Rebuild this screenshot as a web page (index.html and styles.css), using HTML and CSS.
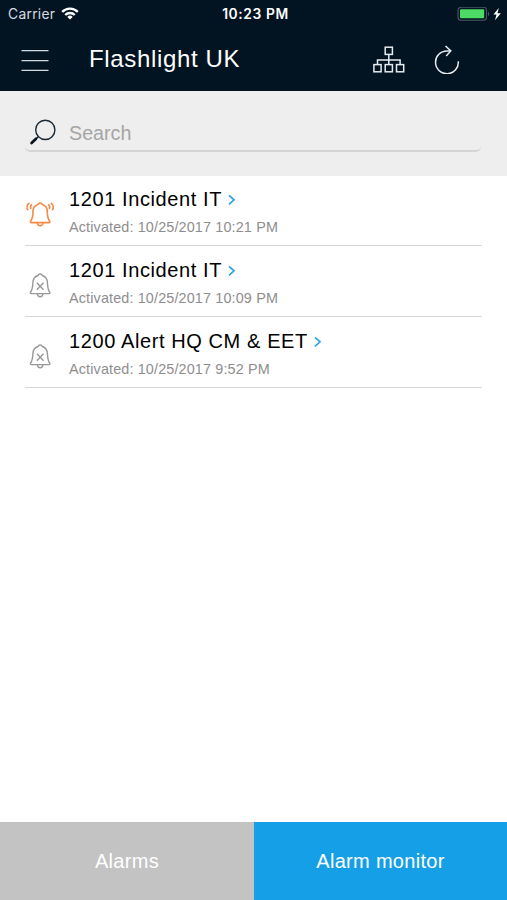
FILE: index.html
```html
<!DOCTYPE html>
<html lang="en">
<head>
  <meta charset="UTF-8" />
  <meta name="viewport" content="width=device-width, initial-scale=1.0"/>
  <title>Flashlight UK</title>
  <link rel="stylesheet" href="styles.css">
</head>
<body>

  <header class="header">
    <div class="status-bar">
      <div class="carrier">
        <span>Carrier</span>
        <svg class="wifi" width="18" height="13" viewBox="0 0 18 13" fill="none" stroke="#fff" stroke-width="2.3">
          <path d="M1.2 4.9a11 11 0 0 1 15.6 0M4.2 8a6.8 6.8 0 0 1 9.6 0" />
          <path d="M9 12.6L6.3 9.9a3.8 3.8 0 0 1 5.4 0z" fill="#fff" stroke="none" />
        </svg>
      </div>
      <div class="clock">10:23 PM</div>
      <div class="power">
        <svg width="45" height="15" viewBox="0 0 45 15">
          <rect x="1" y=".3" width="28.5" height="13" rx="3" fill="none" stroke="#4b5863" stroke-width="1.1" />
          <rect x="3" y="2.3" width="24.2" height="9" rx="1" fill="#4cd964" />
          <path d="M31 4.7c1.6.5 1.6 3.7 0 4.2z" fill="#4b5863" />
          <path d="M41.8 1L36.4 7.6h3.1L38 13.2l5.8-7h-3.3z" fill="#fff" />
        </svg>
      </div>
    </div>

    <div class="nav-bar">
      <svg class="menu-icon" width="28" height="24" viewBox="0 0 28 24" stroke="#d3dbe1" stroke-width="1.3">
        <path d="M.5 2.7h27M.5 12.7h27M.5 22.4h27" />
      </svg>
      <h1>Flashlight UK</h1>
      <svg class="network-icon" width="32" height="27" viewBox="0 0 32 27" fill="none" stroke="#e6ebef" stroke-width="1.5">
        <rect x="12.2" y="1.2" width="7.2" height="7.2" />
        <rect x=".9" y="18.6" width="7.2" height="7.2" />
        <rect x="12.2" y="18.6" width="7.2" height="7.2" />
        <rect x="23.5" y="18.6" width="7.2" height="7.2" />
        <path d="M15.8 8.4v10.2M4.5 18.6v-4.7h22.6v4.7" />
      </svg>
      <svg class="refresh-icon" width="26" height="29" viewBox="0 0 26 29" fill="none" stroke="#e6ebef" stroke-width="1.5">
        <path d="M24.3 16.3A11.4 11.4 0 1 1 13 5.9H16.6" />
        <path d="M11.5 1l5.3 4.9-4.6 5" />
      </svg>
    </div>
  </header>

  <div class="search">
    <div class="search-field">
      <svg width="27" height="27" viewBox="0 0 27 27" fill="none" stroke="#1b2936">
        <circle cx="16.3" cy="10.9" r="9.6" stroke-width="1.4" />
        <path d="M9.4 17.6L7 20" stroke-width="1.4" />
        <path d="M7 19.8L2.6 24" stroke="#06121e" stroke-width="2.7" stroke-linecap="round" />
      </svg>
      <span>Search</span>
    </div>
  </div>

  <main class="alarm-list">
    <div class="alarm active">
      <svg class="bell" width="30" height="28" viewBox="0 0 30 28">
        <path d="M6.2 22.6c-1 0-1.1-.8-.5-1.6 2-2.5 2.3-4.4 2.3-9.5 0-3.7 2.2-6.1 5-7 .4-2 3.9-2 4.3 0 2.8.9 5 3.3 5 7 0 5.1.3 7 2.3 9.5.6.8.5 1.6-.5 1.6z" />
        <path d="M12.4 22.8c.3 4.1 5.2 4.1 5.5 0" />
        <path d="M4.4 3C1.6 4.6 1.3 7.7 3 10.2M7 4.4C5.4 5.4 5.1 7.2 6 9M25.8 3c2.8 1.6 3.1 4.7 1.4 7.2M23.2 4.4c1.6 1 1.9 2.8 1 4.6" />
      </svg>
      <div class="alarm-text">
        <h2>1201 Incident IT <svg class="chevron" width="8" height="12" viewBox="0 0 8 12"><path d="M1 1.3l5 4.5-5 4.5" /></svg></h2>
        <p>Activated: 10/25/2017 10:21 PM</p>
      </div>
    </div>

    <div class="alarm">
      <svg class="bell" width="30" height="28" viewBox="0 0 30 28">
        <path d="M6.2 23.6c-1 0-1.1-.8-.5-1.6 1.7-2.5 2-4.4 2.2-9.5.2-3.7 2.3-6.1 5.1-7 .4-2 3.9-2 4.3 0 2.8.9 4.9 3.3 5.1 7 .2 5.1.5 7 2.2 9.5.6.8.5 1.6-.5 1.6z" />
        <path d="M12.4 23.8c.3 4 5.2 4 5.5 0M11.9 12.8l6.6 7M18.5 12.8l-6.6 7" />
      </svg>
      <div class="alarm-text">
        <h2>1201 Incident IT <svg class="chevron" width="8" height="12" viewBox="0 0 8 12"><path d="M1 1.3l5 4.5-5 4.5" /></svg></h2>
        <p>Activated: 10/25/2017 10:09 PM</p>
      </div>
    </div>

    <div class="alarm">
      <svg class="bell" width="30" height="28" viewBox="0 0 30 28">
        <path d="M6.2 23.6c-1 0-1.1-.8-.5-1.6 1.7-2.5 2-4.4 2.2-9.5.2-3.7 2.3-6.1 5.1-7 .4-2 3.9-2 4.3 0 2.8.9 4.9 3.3 5.1 7 .2 5.1.5 7 2.2 9.5.6.8.5 1.6-.5 1.6z" />
        <path d="M12.4 23.8c.3 4 5.2 4 5.5 0M11.9 12.8l6.6 7M18.5 12.8l-6.6 7" />
      </svg>
      <div class="alarm-text">
        <h2>1200 Alert HQ CM &amp; EET <svg class="chevron" width="8" height="12" viewBox="0 0 8 12"><path d="M1 1.3l5 4.5-5 4.5" /></svg></h2>
        <p>Activated: 10/25/2017 9:52 PM</p>
      </div>
    </div>
  </main>

  <nav class="tabs">
    <div class="tab">Alarms</div>
    <div class="tab selected">Alarm monitor</div>
  </nav>

</body>
</html>
```

FILE: styles.css
```css
* {
  box-sizing: border-box;
  margin: 0;
  padding: 0;
}

body {
  font-family: "Liberation Sans", Arial, sans-serif;
  background: #fff;
  height: 100vh;
  display: flex;
  flex-direction: column;
  overflow: hidden;
}

svg {
  display: block;
  flex-shrink: 0;
}

/* Header */
.header {
  height: 91px;
  background: #021422;
  color: #fff;
}

.status-bar {
  height: 28px;
  padding: 0 5px 0 8px;
  display: grid;
  grid-template-columns: 1fr auto 1fr;
  align-items: center;
  font-family: Inter, sans-serif;
  font-size: 13.8px;
}

.carrier {
  display: flex;
  align-items: center;
  gap: 6px;
  color: #d5dbe0;
  letter-spacing: 0.3px;
}

.wifi {
  margin-top: -2px;
}

.clock {
  padding-left: 1px;
  font-weight: 600;
  font-size: 13.8px;
  letter-spacing: 0.6px;
}

.power {
  justify-self: end;
}

.nav-bar {
  height: 63px;
  padding: 0 47px 0 21px;
  display: flex;
  align-items: center;
}

.nav-bar h1 {
  flex: 1;
  margin: -2px 0 0 40px;
  font-size: 24px;
  font-weight: normal;
  letter-spacing: 0.65px;
}

.refresh-icon {
  margin-left: 29px;
}

/* Search */
.search {
  height: 85px;
  padding: 24px 26px 0 25px;
  background: #eee;
}

.search-field {
  height: 37px;
  padding: 0 4px;
  display: flex;
  align-items: center;
  gap: 13px;
  border-bottom: 2px solid #d5d5d5;
  border-radius: 5px;
  font-size: 19.7px;
  color: #a5a5a5;
}

.search-field span {
  padding-top: 2px;
}

/* Alarm list */
.alarm-list {
  flex: 1;
  padding: 0 25px;
}

.alarm {
  height: 71px;
  display: flex;
  gap: 14px;
  border-bottom: 1px solid #d4d8da;
}

.alarm:first-child {
  height: 70px;
}

.bell {
  margin-top: 24px;
  fill: none;
  stroke: #999;
  stroke-width: 1.4;
}

.alarm.active .bell {
  stroke: #f58a45;
  stroke-width: 1.6;
}

.alarm-text {
  padding-top: 12px;
}

.alarm.active .alarm-text {
  padding-top: 11px;
}

.alarm h2 {
  display: flex;
  align-items: center;
  gap: 6px;
  font-size: 20px;
  line-height: 24px;
  font-weight: normal;
  letter-spacing: 0.6px;
  color: #000;
}

.chevron {
  margin-top: 2px;
  fill: none;
  stroke: #2ba3e4;
  stroke-width: 1.7;
}

.alarm p {
  margin-top: 7px;
  font-size: 14.4px;
  line-height: 18px;
  letter-spacing: 0.14px;
  color: #8e8e8e;
}

/* Bottom tabs */
.tabs {
  display: flex;
  height: 78px;
}

.tab {
  width: 254px;
  display: flex;
  align-items: center;
  justify-content: center;
  background: #c3c3c3;
  color: #fff;
  font-size: 20px;
  letter-spacing: 0.3px;
}

.tab.selected {
  flex: 1;
  background: #159fe6;
}
```
